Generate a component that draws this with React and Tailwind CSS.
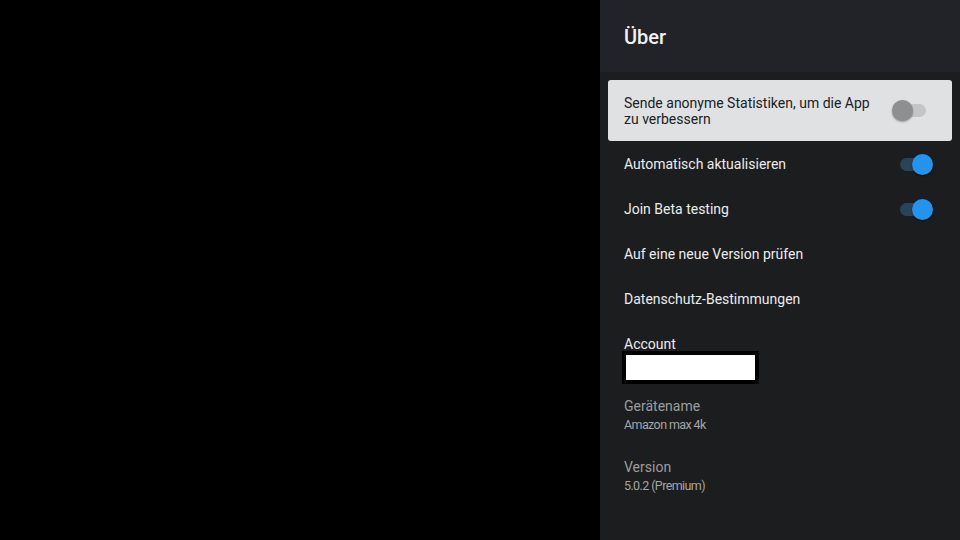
import React, { useState } from "react";

function Toggle({ on }) {
  if (!on) {
    return (
      <div className="relative w-[34px] h-[22px] flex items-center">
        <div className="absolute left-[1px] w-[33px] h-[13px] rounded-full bg-[#c3c5c6]" />
        <div className="absolute left-0 w-[21px] h-[21px] rounded-full bg-[#8e8f90] shadow-[0_1px_2px_rgba(0,0,0,0.35)]" />
      </div>
    );
  }
  return (
    <div className="relative w-[34px] h-[22px] flex items-center">
      <div className="absolute left-0 w-[32px] h-[13px] rounded-full bg-[#2c4357]" />
      <div className="absolute left-[12px] w-[21px] h-[21px] rounded-full bg-[#2394ee] shadow-[0_1px_2px_rgba(0,0,0,0.5)]" />
    </div>
  );
}

function Row({ label, toggle }) {
  return (
    <div className="h-[45px] flex items-center justify-between pl-[24px] pr-[26px]">
      <span className="text-[14px] text-[#ececec]">{label}</span>
      {toggle !== undefined && <Toggle on={toggle} />}
    </div>
  );
}

function Info({ label, value }) {
  return (
    <div className="pl-[24px] h-[61px] flex flex-col justify-center">
      <span className="text-[14px] leading-[18px] text-[#9c9d9e]">{label}</span>
      <span className="text-[12.5px] leading-[18px] tracking-[-0.6px] text-[#a4a5a6] mt-[1px]">{value}</span>
    </div>
  );
}

export default function App() {
  const [stats] = useState(false);

  return (
    <div className="w-[960px] h-[540px] bg-black flex font-['Roboto',sans-serif]">
      <div className="flex-1" />
      <div className="w-[360px] h-full bg-[#1b1d1f] flex flex-col">
        <div className="h-[72px] bg-[#212328] flex items-center pl-[24px]">
          <h1 className="text-[20px] font-medium text-[#f2f2f2] mt-[1px]">Über</h1>
        </div>

        <div className="px-[8px] pt-[8px] pb-[1px]">
          <div className="h-[61px] rounded-[3px] bg-[#dfe1e2] flex items-center justify-between pl-[16px] pr-[26px]">
            <span className="text-[14px] leading-[16px] text-[#202124] w-[260px]">
              Sende anonyme Statistiken, um die App zu verbessern
            </span>
            <Toggle on={stats} />
          </div>
        </div>

        <Row label="Automatisch aktualisieren" toggle={true} />
        <Row label="Join Beta testing" toggle={true} />
        <Row label="Auf eine neue Version prüfen" />
        <Row label="Datenschutz-Bestimmungen" />

        <div className="pl-[22px] pt-[13px] h-[63px]">
          <div className="text-[14px] leading-[18px] text-[#ececec] pl-[2px]">Account</div>
          <div className="w-[137px] h-[33px] bg-black p-[4px] mt-[-2px]">
            <div className="w-full h-full bg-white" />
          </div>
        </div>

        <Info label="Gerätename" value="Amazon max 4k" />
        <Info label="Version" value="5.0.2 (Premium)" />
      </div>
    </div>
  );
}
